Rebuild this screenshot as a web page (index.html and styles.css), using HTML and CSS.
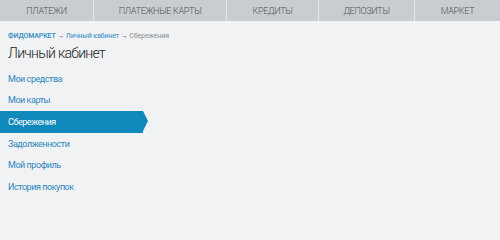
FILE: index.html
```html
<!DOCTYPE html>
<html lang="ru">
<head>
<meta charset="utf-8">
<link rel="stylesheet" href="styles.css">
</head>
<body>
<nav class="topnav">
  <a class="tab t1">ПЛАТЕЖИ</a>
  <a class="tab t2">ПЛАТЕЖНЫЕ КАРТЫ</a>
  <a class="tab t3">КРЕДИТЫ</a>
  <a class="tab t4">ДЕПОЗИТЫ</a>
  <a class="tab t5">МАРКЕТ</a>
</nav>
<main class="content">
  <div class="crumbs"><a class="crumb-root">ФИДОМАРКЕТ</a> <span class="arr">→</span> <a class="crumb">Личный кабинет</a> <span class="arr">→</span> <span class="current">Сбережения</span></div>
  <h1 class="title">Личный кабинет</h1>
  <ul class="menu">
    <li class="item"><a>Мои средства</a></li>
    <li class="item"><a>Мои карты</a></li>
    <li class="item active"><a>Сбережения</a></li>
    <li class="item"><a>Задолженности</a></li>
    <li class="item"><a>Мой профиль</a></li>
    <li class="item"><a>История покупок</a></li>
  </ul>
</main>
</body>
</html>
```
FILE: styles.css
```css
html, body {
  margin: 0;
  padding: 0;
  background: #f1f2f4;
  font-family: "Roboto", "Open Sans", sans-serif;
}
.topnav {
  display: flex;
  height: 21px;
  background: #c9cdd0;
}
.tab {
  display: flex;
  align-items: center;
  justify-content: center;
  font-size: 9px;
  font-weight: 300;
  letter-spacing: -0.3px;
  color: #4f5458;
  border-right: 1px solid #e3e6e8;
  box-sizing: border-box;
}
.t1 { width: 94px; }
.t2 { width: 133px; }
.t3 { width: 92px; }
.t4 { width: 96px; }
.t5 { flex: 1; border-right: none; }
.crumbs {
  margin: 10px 0 0 8px;
  font-size: 7px;
  line-height: 10px;
  color: #8a8f93;
  letter-spacing: -0.1px;
}
.crumb-root { color: #2b8ac0; font-weight: 500; }
.crumb { color: #2b8ac0; }
.arr { color: #333; }
.current { color: #8a8f93; }
.title {
  margin: 4px 0 0 8px;
  font-size: 14px;
  line-height: 17px;
  font-weight: 300;
  letter-spacing: -0.7px;
  color: #222;
}
.menu {
  list-style: none;
  margin: 6px 0 0 0;
  padding: 0;
}
.item {
  height: 21.6px;
  display: flex;
  align-items: center;
  padding-left: 8px;
  font-size: 9px;
  letter-spacing: -0.45px;
  color: #2d87bb;
  width: 143px;
  box-sizing: border-box;
  position: relative;
}
.item.active {
  background: #0f88bb;
  color: #fff;
}
.item.active::after {
  content: "";
  position: absolute;
  right: -5px;
  top: 0;
  border-left: 5px solid #0f88bb;
  border-top: 10.8px solid transparent;
  border-bottom: 10.8px solid transparent;
}
```
